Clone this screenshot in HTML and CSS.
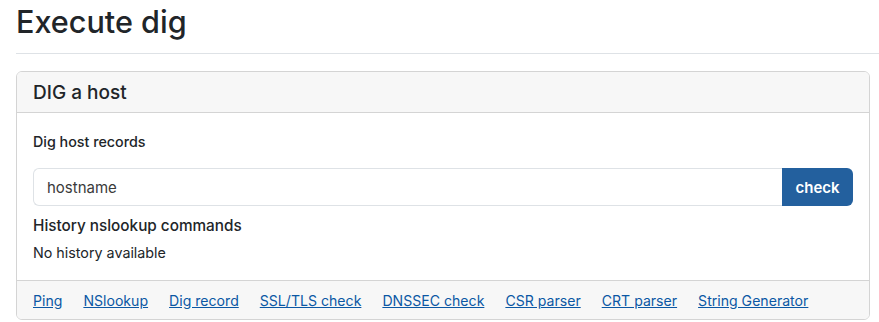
FILE: index.html
```html
<!DOCTYPE html>
<html lang="en">
<head>
    <meta charset="UTF-8">
    <meta name="viewport" content="width=device-width, initial-scale=1.0">
    <title>Execute dig</title>
    <link rel="stylesheet" href="styles.css">
</head>
<body>
    <div class="page">
        <h1 class="page-title">Execute dig</h1>
        <hr class="divider">

        <div class="card">
            <div class="card-header">DIG a host</div>
            <div class="card-body">
                <label class="field-label" for="host">Dig host records</label>
                <form class="input-group" onsubmit="return false;">
                    <input id="host" class="form-control" type="text" placeholder="hostname">
                    <button class="btn-check" type="submit">check</button>
                </form>
                <div class="history-title">History nslookup commands</div>
                <div class="history-empty">No history available</div>
            </div>
            <div class="card-footer">
                <a href="#">Ping</a>
                <a href="#">NSlookup</a>
                <a href="#">Dig record</a>
                <a href="#">SSL/TLS check</a>
                <a href="#">DNSSEC check</a>
                <a href="#">CSR parser</a>
                <a href="#">CRT parser</a>
                <a href="#">String Generator</a>
            </div>
        </div>
    </div>
</body>
</html>
```

FILE: styles.css
```css
body {
    margin: 0;
    padding: 0;
    font-family: Inter, "Liberation Sans", Arial, sans-serif;
    color: #212529;
    background-color: #fff;
}

.page {
    padding: 0 9px 0 16px;
}

.page-title {
    margin: 0;
    padding-top: 4px;
    font-size: 30.6px;
    font-weight: 500;
    line-height: 36px;
}

.divider {
    margin: 13px -9px 17px 0;
    border: 0;
    border-top: 1px solid #dee2e6;
}

.card {
    border: 1px solid #d4d4d4;
    border-radius: 6px;
    overflow: hidden;
}

.card-header {
    background-color: #f7f7f7;
    border-bottom: 1px solid #d4d4d4;
    padding: 0 16px;
    height: 40px;
    line-height: 42px;
    font-size: 19px;
    font-weight: 500;
}

.card-body {
    padding: 19px 16px 17px;
}

.field-label {
    display: block;
    font-size: 14.3px;
    font-weight: 500;
    line-height: 20px;
}

.input-group {
    display: flex;
    margin: 16px 0 10px;
}

.form-control {
    flex: 1;
    height: 38px;
    box-sizing: border-box;
    padding: 0 13px;
    border: 1px solid #dee2e6;
    border-right: 0;
    border-radius: 6px 0 0 6px;
    font-family: inherit;
    font-size: 15px;
    color: #212529;
}

.form-control::placeholder {
    color: #3a3a3a;
}

.btn-check {
    width: 71px;
    height: 38px;
    border: none;
    border-radius: 0 6px 6px 0;
    background-color: #23609e;
    color: #fff;
    font-family: inherit;
    font-size: 15px;
    font-weight: 600;
    cursor: pointer;
}

.history-title {
    font-size: 15.3px;
    font-weight: 500;
    line-height: 20px;
}

.history-empty {
    margin-top: 7px;
    font-size: 14.3px;
    line-height: 20px;
}

.card-footer {
    background-color: #f7f7f7;
    border-top: 1px solid #d4d4d4;
    padding: 0 16px;
    height: 38px;
    display: flex;
    align-items: center;
    gap: 21px;
}

.card-footer a {
    color: #0b57a4;
    font-size: 14.1px;
    text-decoration: underline;
}
```
